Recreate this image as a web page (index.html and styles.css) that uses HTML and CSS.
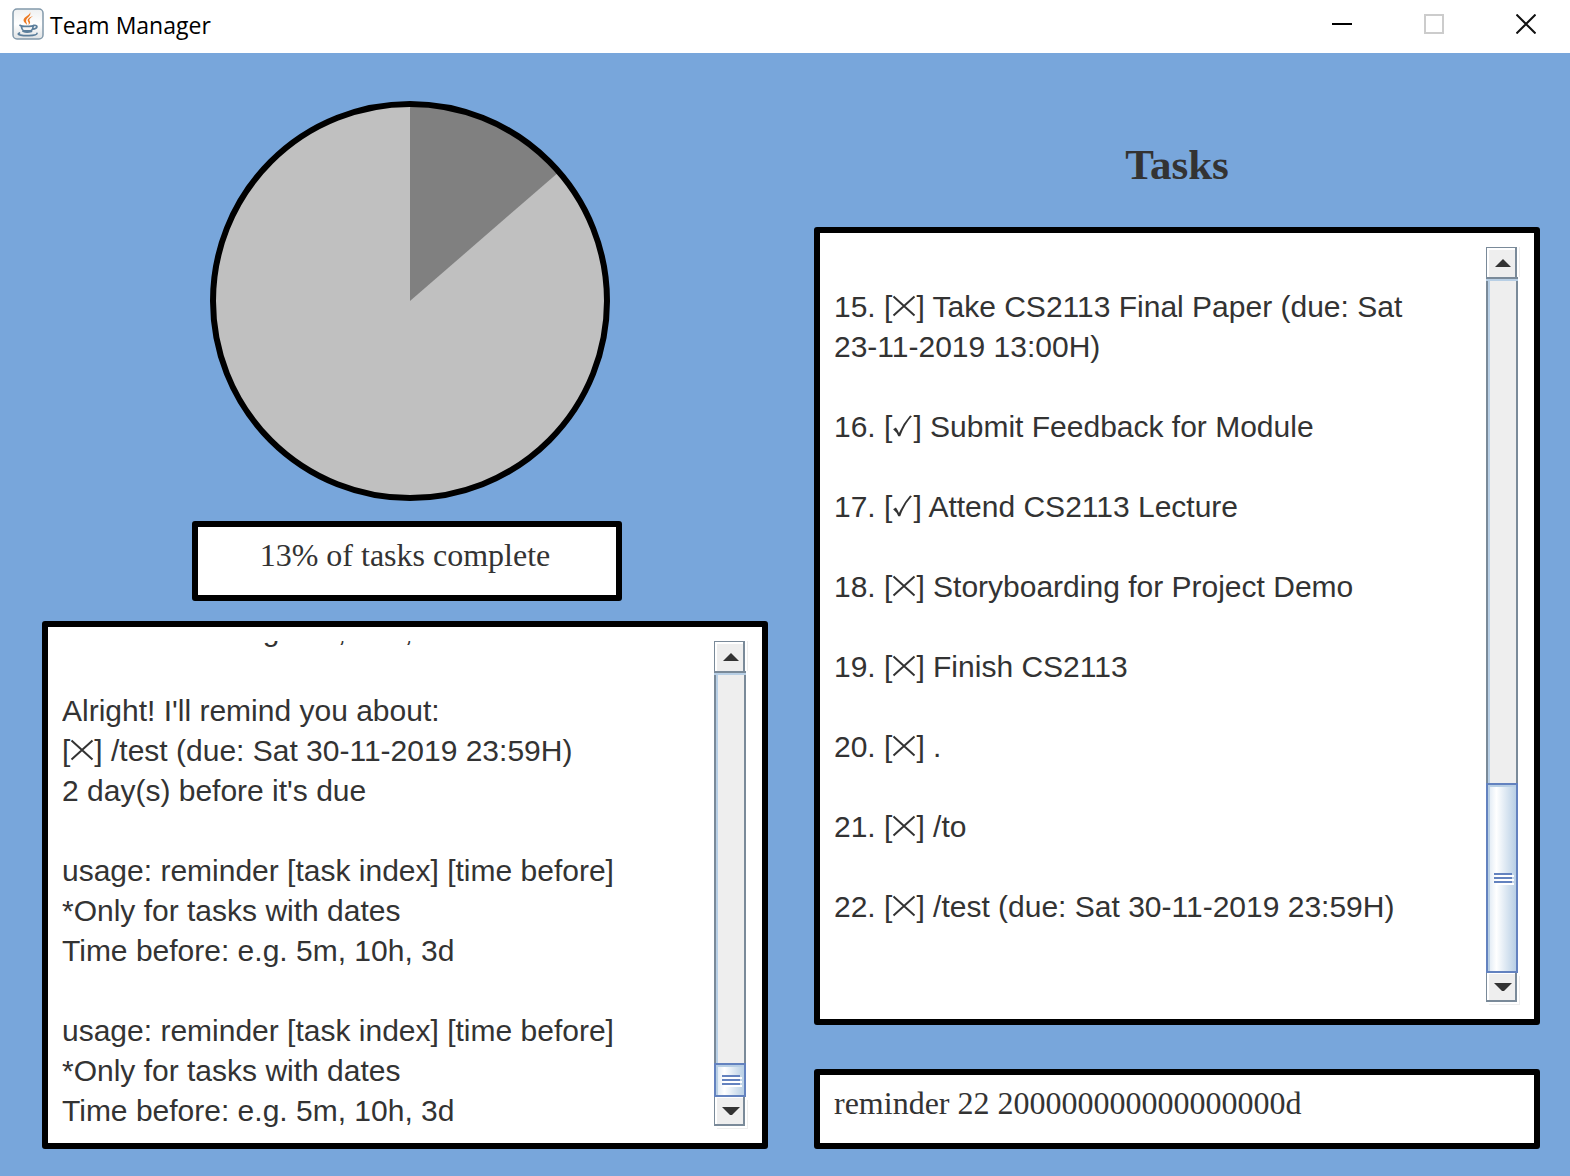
FILE: index.html
```html
<!DOCTYPE html>
<html lang="en">
<head>
<meta charset="utf-8">
<title>Team Manager</title>
<link rel="stylesheet" href="styles.css">
</head>
<body>
<svg class="symbols" aria-hidden="true">
  <symbol id="cross" viewBox="0 0 24 22"><path d="M1.500 1.500 22.500 20.500M22.500 1.500 1.500 20.500" fill="none" stroke="#333" stroke-width="2"/></symbol>
  <symbol id="check" viewBox="0 0 20 22"><path d="M.6 14.200 3.400 12.600Q5.400 15.200 6.500 18 11 8 17.600.6L19.400 1.200Q12 9 7.700 21.200H5.800Q4.300 17.200.6 14.200Z" fill="#333"/></symbol>
</svg>

<header class="titlebar">
  <svg class="app-icon" viewBox="0 0 32 32" aria-hidden="true">
    <defs><linearGradient id="tile" x1="0" y1="0" x2="0" y2="1"><stop offset="0" stop-color="#eef0f1"/><stop offset=".5" stop-color="#fff"/><stop offset="1" stop-color="#dfe2e4"/></linearGradient></defs>
    <rect x="1" y="1" width="30" height="30" rx="4" fill="url(#tile)" stroke="#8299ab" stroke-width="1.5"/>
    <path d="M17.800 3.500c1.800 3.500-6.300 5-6.300 8.700 0 2 2.200 3 3.700 4.800-.3-2.300-1.500-3.200-1-5 1-2.700 5.800-4.300 3.600-8.500ZM21 8c-3.500 1-5.700 3-5.200 5 .4 1.200 1.600 1.800.6 3.900 2.500-1.600 1.800-3.300 1-4.400-.5-1.200 1.200-2.700 3.600-4.500Z" fill="#ec7a23"/>
    <g fill="none" stroke="#5b7e9b" stroke-width="1.700" stroke-linecap="round"><path d="M8 17.300c2 1.500 12 1.500 14 0M9.300 18.300c.3 2 1 3.500 2.200 4.500h7.500c1-.6 1.900-2.200 2.200-4.300M22 17.500c4-.8 4.300 3-1.500 3.700M11 23.300c2 .9 6 .9 8.500.2M7.500 25c-4.500 2 4.500 2.900 9.500 2.600 4.500-.3 8-1.100 8-2.200"/></g>
  </svg>
  <h1 class="window-title">Team Manager</h1>
  <div class="controls">
    <button class="control" type="button" aria-label="Minimize"><svg width="20" height="20"><path d="M0 10H20" stroke="#000" stroke-width="2"/></svg></button>
    <button class="control" type="button" aria-label="Maximize" disabled><svg width="20" height="20"><rect x="1" y="1" width="18" height="18" fill="none" stroke="#ccc" stroke-width="2"/></svg></button>
    <button class="control" type="button" aria-label="Close"><svg width="20" height="20"><path d="M.5.5 19.500 19.500M19.500.5.5 19.500" stroke="#111" stroke-width="2"/></svg></button>
  </div>
</header>

<main class="workspace">
  <section class="column">
    <div class="summary">
      <svg class="pie" viewBox="0 0 400 400" role="img" aria-label="Share of tasks complete">
        <circle cx="200" cy="200" r="197" fill="#c0c0c0"/>
        <path d="M200 200V3A197 197 0 0 1 348.900 71Z" fill="#808080"/>
        <circle cx="200" cy="200" r="197" fill="none" stroke="#000" stroke-width="6"/>
      </svg>
      <p class="progress">13% of tasks complete</p>
    </div>
    <div class="panel log-panel">
      <div class="log">
        <p>Time before: e.g. 5m, 10h, 3d</p>
        <p>Alright! I'll remind you about:<br>[<svg class="cross" role="img" aria-label="not done"><use href="#cross"/></svg>] /test (due: Sat 30-11-2019 23:59H)<br>2 day(s) before it's due</p>
        <p>usage: reminder [task index] [time before]<br>*Only for tasks with dates<br>Time before: e.g. 5m, 10h, 3d</p>
        <p>usage: reminder [task index] [time before]<br>*Only for tasks with dates<br>Time before: e.g. 5m, 10h, 3d</p>
      </div>
      <div class="scrollbar">
        <button class="step up" type="button" aria-label="Scroll log up"><svg width="16" height="8"><path d="M8 0 16 8H0Z" fill="#333"/></svg></button>
        <div class="track"><div class="thumb" style="height:8%"><span class="grip"></span></div></div>
        <button class="step down" type="button" aria-label="Scroll log down"><svg width="18" height="8"><path d="M0 0H18L10 8H8Z" fill="#333"/></svg></button>
      </div>
    </div>
  </section>

  <section class="column">
    <h2 class="heading">Tasks</h2>
    <div class="panel task-panel">
      <ul class="tasks">
        <li>15. [<svg class="cross" role="img" aria-label="not done"><use href="#cross"/></svg>] Take CS2113 Final Paper (due: Sat <span class="date">23-11-2019 13:00H)</span></li>
        <li>16. [<svg class="check" role="img" aria-label="done"><use href="#check"/></svg>] Submit Feedback for Module</li>
        <li>17. [<svg class="check" role="img" aria-label="done"><use href="#check"/></svg>] Attend CS2113 Lecture</li>
        <li>18. [<svg class="cross" role="img" aria-label="not done"><use href="#cross"/></svg>] Storyboarding for Project Demo</li>
        <li>19. [<svg class="cross" role="img" aria-label="not done"><use href="#cross"/></svg>] Finish CS2113</li>
        <li>20. [<svg class="cross" role="img" aria-label="not done"><use href="#cross"/></svg>] .</li>
        <li>21. [<svg class="cross" role="img" aria-label="not done"><use href="#cross"/></svg>] /to</li>
        <li>22. [<svg class="cross" role="img" aria-label="not done"><use href="#cross"/></svg>] /test (due: Sat 30-11-2019 23:59H)</li>
      </ul>
      <div class="scrollbar">
        <button class="step up" type="button" aria-label="Scroll tasks up"><svg width="16" height="8"><path d="M8 0 16 8H0Z" fill="#333"/></svg></button>
        <div class="track"><div class="thumb" style="height:27.3%"><span class="grip"></span></div></div>
        <button class="step down" type="button" aria-label="Scroll tasks down"><svg width="18" height="8"><path d="M0 0H18L10 8H8Z" fill="#333"/></svg></button>
      </div>
    </div>
    <input class="command" type="text" aria-label="Command" value="reminder 22 200000000000000000d">
  </section>
</main>
</body>
</html>
```
FILE: styles.css
```css
* { box-sizing: border-box; }

body {
  margin: 0;
  min-height: 100vh;
  display: flex;
  flex-direction: column;
  background: #78a6db;
  color: #333;
  font-family: "Liberation Sans", Arial, sans-serif;
}

p, h1, h2, ul { margin: 0; padding: 0; }
button { padding: 0; border: 0; background: none; }
.symbols { display: none; }

/* Window title bar */
.titlebar {
  display: flex;
  height: 53px;
  padding-left: 12px;
  background: #fff;
}
.app-icon { width: 32px; height: 32px; margin-top: 8px; }
.window-title {
  flex: 1;
  padding-left: 6px;
  color: #000;
  font: 400 23px/51px "Open Sans", "Noto Sans", sans-serif;
}
.controls { display: flex; gap: 4px; height: 48px; }
.control {
  width: 88px;
  display: flex;
  align-items: center;
  justify-content: center;
}

/* Two equal columns */
.workspace {
  flex: 1;
  display: grid;
  grid-template-columns: 1fr 1fr;
  gap: 46px;
  padding: 48px 30px 27px 42px;
}
.column { display: flex; flex-direction: column; min-width: 0; }

.summary {
  display: flex;
  flex-direction: column;
  align-items: center;
  gap: 20px;
  padding: 0 0 20px 10px;
}
.pie { width: 400px; height: 400px; }

.progress, .panel, .command {
  border: 6px solid #000;
  border-radius: 3px;
  background: #fff;
}
.progress, .command {
  height: 80px;
  color: #333;
  font: 400 32px/56px "Liberation Serif", "Times New Roman", serif;
}
.progress {
  width: 430px;
  margin-right: 6px;
  padding: 0 4px 12px 0;
  text-align: center;
}

.panel {
  flex: 1;
  display: flex;
  font-size: 30px;
  line-height: 40px;
}

/* Reminder log, kept scrolled to its end */
.log-panel { padding: 14px 14px 12px; }
.log {
  flex: 1 0 0;
  height: 490px;
  min-height: 100%;
  display: flex;
  flex-direction: column;
  justify-content: flex-end;
  gap: 40px;
  overflow: hidden;
}
.log-panel .scrollbar { margin-bottom: 2px; }

/* Task list */
.heading {
  padding: 40px 0 38px;
  text-align: center;
  font: 700 43px/48px "Liberation Serif", "Times New Roman", serif;
}
.task-panel { padding: 14px; }
.tasks {
  flex: 1;
  display: flex;
  flex-direction: column;
  gap: 40px;
  padding-top: 40px;
  list-style: none;
}
.date { white-space: nowrap; }
.cross, .check { height: 22px; }
.cross { width: 24px; }
.check { width: 21px; }

.command { width: 100%; margin-top: 44px; padding: 0 14px 12px; outline: 0; }

/* Scroll bars */
.scrollbar {
  width: 34px;
  display: flex;
  flex-direction: column;
}
.step {
  width: 31px;
  display: flex;
  flex: none;
  border: 0 solid #7a8a99;
  background: #eee;
}
.step.up {
  height: 30px;
  padding: 11px 0 0 8px;
  border-width: 1px 2px 0 1px;
  box-shadow: inset 2px 2px #fff, 2px 0 #fff, 3px 0 #eee;
}
.step.down {
  height: 29px;
  margin-bottom: 3px;
  padding: 10px 0 0 7px;
  border-width: 0 2px 2px 1px;
  box-shadow: inset 2px 1px #fff, 2px 2px #fff, 3px 3px #eee;
}
.track {
  flex: 1;
  width: 32px;
  display: flex;
  flex-direction: column;
  justify-content: flex-end;
  background: linear-gradient(90deg, #7a8a99 2px, #b8cfe5 2px 4px, #eee 4px 30px, #7a8a99 30px);
  box-shadow: inset 0 2px #7a8a99, inset 0 4px #b8cfe5;
}
.thumb {
  display: flex;
  align-items: center;
  padding-left: 6px;
  border: 2px solid #6382bf;
  background: linear-gradient(90deg, #dde8f3, #fff 30%, #b8cfe5);
  box-shadow: inset 2px 2px #b8cfe5;
}
.grip {
  width: 18px;
  height: 10px;
  background: repeating-linear-gradient(#6382bf 0 2px, transparent 2px 4px);
  filter: drop-shadow(2px 2px 0 #fff);
}
```
